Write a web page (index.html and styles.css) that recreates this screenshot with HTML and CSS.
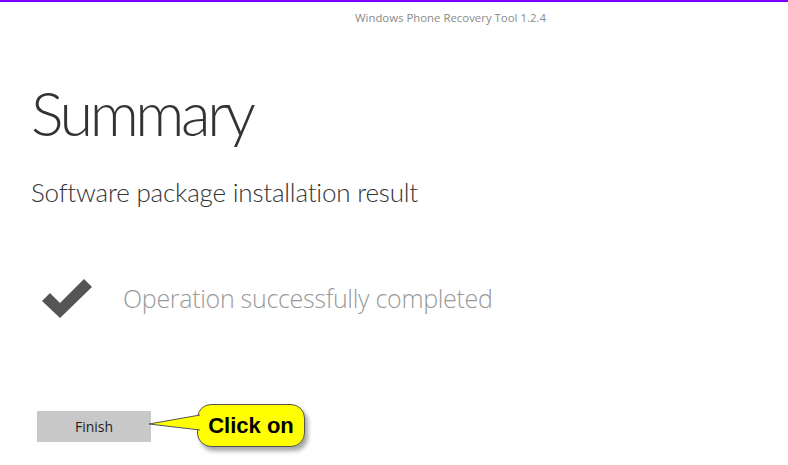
FILE: index.html
```html
<!DOCTYPE html>
<html>
<head>
<meta charset="utf-8">
<link rel="stylesheet" href="styles.css">
</head>
<body>
<div class="topbar"></div>
<div class="apptitle">Windows Phone Recovery Tool 1.2.4</div>
<main class="content">
  <h1 class="heading">Summary</h1>
  <h2 class="subheading">Software package installation result</h2>
  <div class="result">
    <svg class="check" width="54" height="40" viewBox="0 0 54 40">
      <path d="M2 23 L10 15 L20 25 L44 1 L52 9 L20 40 Z" fill="#555555"/>
    </svg>
    <span class="result-text">Operation successfully completed</span>
  </div>
  <div class="actions">
    <button class="finish">Finish</button>
    <div class="callout">
      <svg class="pointer" width="60" height="30" viewBox="0 0 60 30">
        <path d="M52 7 L1 16 L52 22" fill="#ffff00" stroke="#555" stroke-width="1"/>
      </svg>
      <span class="callout-text">Click on</span>
    </div>
  </div>
</main>
</body>
</html>
```
FILE: styles.css
```css
html, body {
  margin: 0;
  padding: 0;
  background: #ffffff;
}
body {
  width: 788px;
  height: 465px;
  overflow: hidden;
  font-family: "Open Sans", "Noto Sans", sans-serif;
}
.topbar {
  height: 2px;
  background: #7f00ff;
}
.apptitle {
  padding-left: 355px;
  margin-top: 9px;
  font-size: 11.4px;
  line-height: 14px;
  color: #8a8a8a;
  font-weight: 400;
}
.content {
  padding-left: 31px;
}
.heading {
  margin: 53px 0 0 0;
  font-family: Lato, "Open Sans", sans-serif;
  font-size: 61px;
  line-height: 70px;
  font-weight: 300;
  color: #333333;
  letter-spacing: -3.4px;
}
.subheading {
  margin: 28px 0 0 0;
  font-family: Lato, "Open Sans", sans-serif;
  font-size: 26px;
  line-height: 32px;
  font-weight: 300;
  color: #333333;
  letter-spacing: -0.2px;
}
.result {
  display: flex;
  align-items: center;
  gap: 29px;
  margin-top: 70px;
  margin-left: 9px;
}
.check {
  display: block;
}
.result-text {
  font-size: 25px;
  line-height: 32px;
  font-weight: 300;
  color: #9a9a9a;
  letter-spacing: -0.3px;
}
.actions {
  position: relative;
  margin-top: 93px;
  margin-left: 6px;
  height: 40px;
}
.finish {
  display: block;
  width: 114px;
  height: 31px;
  border: none;
  background: #c8c8c8;
  font-family: "Open Sans", "Noto Sans", sans-serif;
  font-size: 14px;
  color: #1e1e1e;
  padding: 0;
}
.callout {
  position: absolute;
  left: 160px;
  top: -7px;
  width: 106px;
  height: 41px;
  background: #ffff00;
  border: 1px solid #555555;
  border-radius: 14px;
  box-shadow: 3px 4px 4px rgba(0, 0, 0, 0.35);
  display: flex;
  align-items: center;
  justify-content: center;
}
.pointer {
  position: absolute;
  left: -50px;
  top: 3px;
}
.callout-text {
  position: relative;
  font-family: "Liberation Sans", Arial, sans-serif;
  font-weight: 700;
  font-size: 22px;
  color: #000000;
}
```
